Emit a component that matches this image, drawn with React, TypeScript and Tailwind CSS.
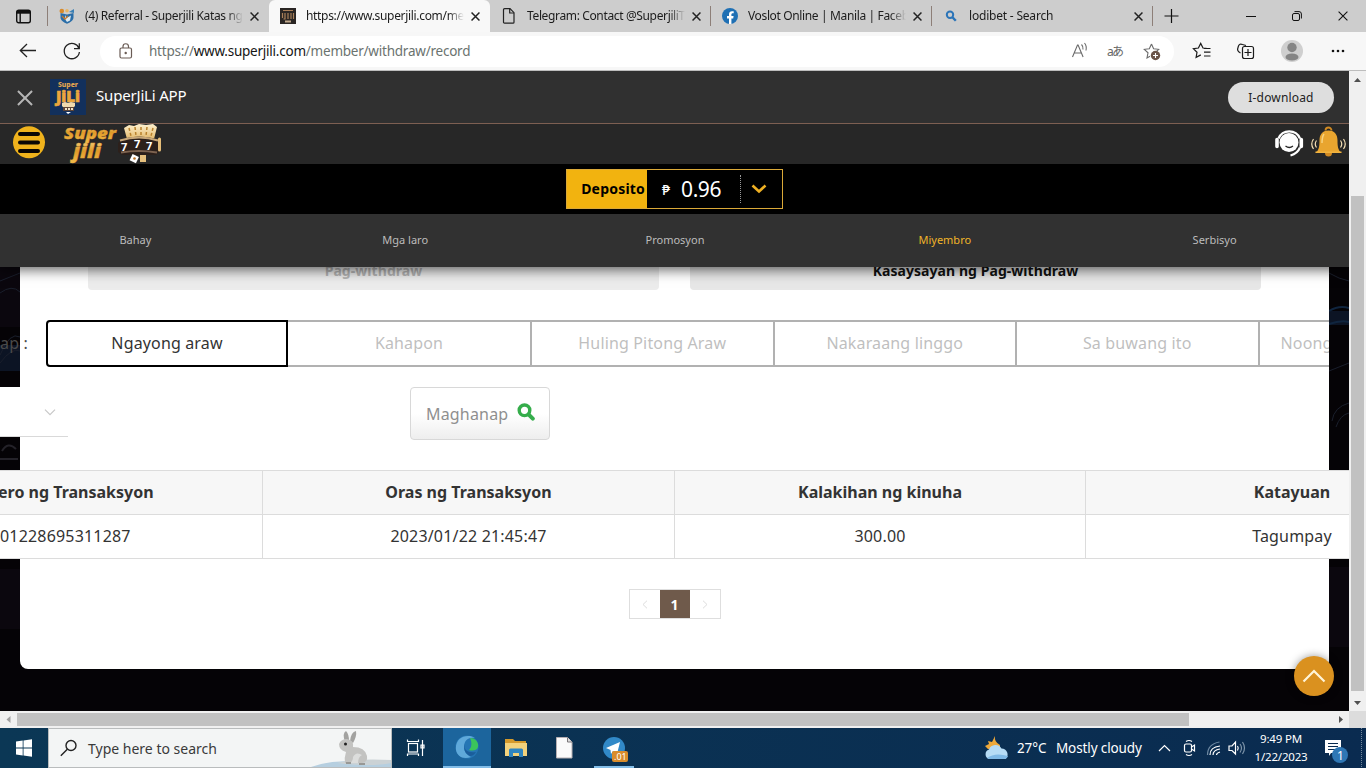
import type { ReactNode } from 'react';
import clsx from 'clsx';

const tabs = [
  { title: '(4) Referral - Superjili Katas ng', icon: 'shield', active: false, track: 'tracking-[-0.36px]' },
  { title: 'https://www.superjili.com/mem', icon: 'jili', active: true, track: 'tracking-[-0.32px]' },
  { title: 'Telegram: Contact @SuperjiliT', icon: 'file', active: false, track: 'tracking-[-0.36px]' },
  { title: 'Voslot Online | Manila | Facebo', icon: 'facebook', active: false, track: 'tracking-[-0.36px]' },
  { title: 'lodibet - Search', icon: 'search', active: false, track: 'tracking-[-0.2px]' },
];

const menus = ['Bahay', 'Mga laro', 'Promosyon', 'Miyembro', 'Serbisyo'];

const periods = ['Ngayong araw', 'Kahapon', 'Huling Pitong Araw', 'Nakaraang linggo', 'Sa buwang ito'];

function Favicon({ name }: { name: string }) {
  switch (name) {
    case 'shield':
      return (
        <svg width="16" height="16" viewBox="0 0 16 16">
          <path d="M1.500 5 8 6.500 14.500 5v4.500c0 3-3.500 5-6.500 6.200C5 14.500 1.500 12.500 1.500 9.500z" fill="#2b6ea8" />
          <path d="m6 7 1.500 3L12 7.500l-1 5-3 1.500-2-3z" fill="#dfe9ee" />
          <circle cx="2.800" cy="3" r="2.300" fill="#d78a2b" />
          <circle cx="8" cy="2.800" r="1.800" fill="#e7b565" />
          <path d="m10 4 5-3v4z" fill="#3a80b5" />
          <path d="m3 8 3 3 3-3" stroke="#c8792a" strokeWidth="1.300" fill="none" />
        </svg>
      );
    case 'jili':
      return (
        <svg width="16" height="16" viewBox="0 0 16 16">
          <rect width="16" height="16" fill="#2a2624" />
          <path d="M3 2.500h10M2.500 5v5M5 5v6H3.500M8 5v6M11 5v6M13.500 5v6" stroke="#a9805a" strokeWidth="1.200" fill="none" />
          <path d="M5 13.500h6" stroke="#c0a88c" strokeWidth="2" />
        </svg>
      );
    case 'file':
      return (
        <svg width="16" height="16" viewBox="0 0 16 16" fill="none" stroke="#222" strokeWidth="1.200">
          <path d="M3.500.7H9l4 4v9.500a1 1 0 0 1-1 1H3.500a1 1 0 0 1-1-1V1.700a1 1 0 0 1 1-1z" />
          <path d="M8.700.8v4.200h4.200" />
        </svg>
      );
    case 'facebook':
      return (
        <svg width="16" height="16" viewBox="0 0 16 16">
          <circle cx="8" cy="8" r="8" fill="#1f70b4" />
          <path d="M7 16v-5.600H5V8.100h2V6.300c0-2 1.200-3.100 3-3.100l1.700.1v2h-1c-1 0-1.300.6-1.300 1.200v1.600h2.200l-.4 2.300H9.400V16z" fill="#fff" />
        </svg>
      );
    default:
      return (
        <svg width="16" height="16" viewBox="0 0 16 16" fill="none" stroke="#2b74b8" strokeWidth="2">
          <circle cx="7" cy="6.800" r="3.200" />
          <path d="m9.400 9.200 3.400 3.600" strokeWidth="2.400" />
        </svg>
      );
  }
}

function Cross({ size = 9, stroke = 1.5, color = '#222' }: { size?: number; stroke?: number; color?: string }) {
  return (
    <svg width={size} height={size} viewBox="0 0 10 10" stroke={color} strokeWidth={(stroke * 10) / size} className="shrink-0">
      <path d="m.6.6 8.800 8.800M9.400.6.6 9.400" />
    </svg>
  );
}

/** Browser tab strip with the window buttons on its right end. */
function TabStrip() {
  return (
    <div className="flex h-8 items-center bg-[#cdcdcd]">
      <div className="flex h-5 w-12 items-center justify-center border-r border-[#8d7f78]">
        <svg width="15" height="15" viewBox="0 0 15 15" fill="none" stroke="#111" strokeWidth="1.400">
          <rect x=".7" y="1.200" width="13.600" height="12.600" rx="2" />
          <path d="M.7 3.200h13.600" strokeWidth="3" />
          <path d="M4.200 4v9.500" />
        </svg>
      </div>
      {tabs.map((tab, i) => (
        <div
          key={tab.title}
          className={clsx(
            'flex w-[221px] items-center pl-[11px]',
            tab.active ? 'h-8 rounded-t-md bg-[#f8f8f8]' : 'h-5',
            i > 1 && 'border-r border-[#8d7f78]',
          )}
        >
          <Favicon name={tab.icon} />
          <div
            className={clsx(
              'ml-[10px] w-[158px] overflow-hidden text-[12px] leading-5 whitespace-nowrap text-[#1c1c1c]',
              '[mask-image:linear-gradient(to_right,black_90%,transparent)]',
              tab.track,
            )}
          >
            {tab.title}
          </div>
          <div className="ml-[7px]">
            <Cross />
          </div>
        </div>
      ))}
      <svg width="36" height="16" viewBox="0 0 36 16" stroke="#111" strokeWidth="1.200">
        <path d="M18.500 1v14M11.500 8h14" />
      </svg>
      <div className="flex flex-1 items-center justify-end gap-9 pr-[18px]">
        <svg width="10" height="10" viewBox="0 0 10 10" stroke="#111">
          <path d="M0 5.500h10" />
        </svg>
        <svg width="10" height="10" viewBox="0 0 10 10" fill="none" stroke="#111">
          <rect x=".5" y="2.500" width="7" height="7" rx="1.500" />
          <path d="M2.500.6H7A2.400 2.400 0 0 1 9.400 3v4.500" />
        </svg>
        <Cross size={10} stroke={1.1} color="#111" />
      </div>
    </div>
  );
}

function AddressBar() {
  return (
    <div className="flex h-[39px] items-center border-b border-[#bdbdbd] bg-[#f7f7f7]">
      <svg width="100" height="38" viewBox="0 0 100 38" fill="none" stroke="#222" strokeWidth="1.300">
        <path d="M36 18.500H20.500M27 12l-6.700 6.500L27 25" />
        <path d="M79 16.500a7.600 7.600 0 1 0 .4 3.500M79.300 11.300v5.400h-5.300" />
      </svg>
      <div className="flex h-[31px] w-[1074px] items-center rounded-full bg-white pl-[19px]">
        <svg width="14" height="16" viewBox="0 0 14 16" fill="none" stroke="#6a5c55" strokeWidth="1.200">
          <rect x="1" y="5" width="11.500" height="10" rx="1.500" />
          <path d="M4 5V3.500a2.700 2.700 0 0 1 5.500 0V5" />
          <circle cx="6.700" cy="10" r=".6" fill="#6a5c55" />
        </svg>
        <div className="ml-4 flex-1 text-[13.500px] leading-5 tracking-[-0.23px] whitespace-nowrap text-[#6b736f]">
          https://<span className="text-[#151515]">www.superjili.com</span>/member/withdraw/record
        </div>
        <svg width="106" height="30" viewBox="0 0 106 30" fill="none" stroke="#6a6a6a" strokeWidth="1.100">
          <path d="m4.500 21 5-12h.6l5 12M6.200 17h7M13.500 8.500q2 2 1.500 5M16.500 7q2.500 3 1.500 7.500" />
          <text x="39" y="19.500" fontSize="12" fill="#666" stroke="none" fontFamily="Noto Sans, Noto Sans CJK JP" textLength="17">
            aあ
          </text>
          <path d="m83.500 8 2.100 4.700 5.100.6-3.800 3.500M83.500 8l-2.200 4.700-5 .6 3.700 3.500-1 5.200 3-1.700" />
          <circle cx="87.500" cy="19.500" r="4.700" fill="#6a5348" stroke="none" />
          <path d="M87.500 17v5M85 19.500h5" stroke="#fff" />
        </svg>
      </div>
      <svg width="192" height="38" viewBox="0 0 192 38" fill="none" stroke="#1c1c1c" strokeWidth="1.200">
        <path d="M32.500 16.300 29 16l-2.300-4.600-2.300 4.600-5 .7 3.600 3.600-.9 5.100 4.700-2.500M30 16.500h6.500M30 20.200h6.500M30 24h6.500" />
        <rect x="68.500" y="14.500" width="11" height="12" rx="2" />
        <path d="M74 17v7M70.500 20.500h7M66.500 21c-4-2-3-4-2-7 .7-2 2-2.300 4-1.500l3.500 1" />
        <circle cx="118" cy="19" r="11" fill="#cfcfcf" stroke="none" />
        <circle cx="118" cy="15.500" r="4.700" fill="#858585" stroke="none" />
        <ellipse cx="118" cy="25" rx="6.500" ry="3.600" fill="#858585" stroke="none" />
        <g fill="#111" stroke="none">
          <circle cx="159" cy="19" r="1.300" />
          <circle cx="164" cy="19" r="1.300" />
          <circle cx="169" cy="19" r="1.300" />
        </g>
      </svg>
    </div>
  );
}

function AppBanner() {
  return (
    <div className="flex h-[53px] items-center border-b border-[#7d5f52] bg-[#303030] pr-[15px] pl-[17px]">
      <div className="mt-[2px]">
        <Cross size={16} stroke={2} color="#b5b5b5" />
      </div>
      <svg width="36" height="36" viewBox="0 0 36 36" className="ml-[17px]">
        <rect width="36" height="36" fill="#12305c" />
        <text x="8" y="8" fontSize="7" fontWeight="800" fill="#e3a44e" textLength="20" lengthAdjust="spacingAndGlyphs">
          Super
        </text>
        <text x="6" y="22.500" fontSize="15" fontWeight="900" fill="#eaa63d" stroke="#eaa63d" strokeWidth=".6" textLength="24" lengthAdjust="spacingAndGlyphs">
          JiLi
        </text>
        <path d="m12 24 3-1 3 1 3-1 4 1v3l-2 2h-9l-2-2z" fill="#efd9ae" />
        <path d="M13 28h11v4H13z" fill="#5e4537" />
        <path d="M15 30h2M18 30h2M21 30h2" stroke="#f1e3c8" strokeWidth="2" />
        <path d="m16 33 2 2 3-2z" fill="#fff" />
      </svg>
      <span className="mb-1 ml-[10px] flex-1 text-[15px] tracking-[-0.18px] text-white">SuperJiLi APP</span>
      <button className="h-[31px] w-[106px] rounded-full bg-[#dedede] pt-px text-[12px] tracking-[0.17px] text-[#222]">I-download</button>
    </div>
  );
}

function SiteHeader() {
  return (
    <div className="flex h-10 items-center justify-between bg-[#272727] pr-[2px] pl-[13px]">
      <div className="flex items-center">
        <svg width="32" height="40" viewBox="0 0 32 40">
          <circle cx="16" cy="18.200" r="16" fill="#efb21c" />
          <path d="M7 10h18M7 18.500h18M7 27h18" stroke="#0a0705" strokeWidth="4" strokeLinecap="round" />
        </svg>
        <svg width="104" height="40" viewBox="0 0 104 40" className="ml-[17px]">
          <defs>
            <linearGradient id="gold" x1="0" y1="0" x2="0" y2="1">
              <stop offset="0" stopColor="#fbdf95" />
              <stop offset=".5" stopColor="#e09a28" />
              <stop offset="1" stopColor="#f4c04d" />
            </linearGradient>
            <linearGradient id="cards" x1="0" y1="0" x2="0" y2="1">
              <stop offset="0" stopColor="#fff2cf" />
              <stop offset="1" stopColor="#e2b86a" />
            </linearGradient>
          </defs>
          <g fill="url(#gold)" stroke="#e2a136" strokeWidth=".3" fontWeight="800" fontStyle="italic" fontFamily="Open Sans">
            <text x="2" y="14.500" fontSize="16" textLength="52" lengthAdjust="spacingAndGlyphs">
              Super
            </text>
            <text x="11" y="34" fontSize="19" textLength="28" lengthAdjust="spacingAndGlyphs">
              jili
            </text>
          </g>
          <path d="m62 4 5-3 5 1 5-2 7 1 7-1 4 3-3 12H65z" fill="url(#cards)" />
          <path d="m67 4 2 8M73 3l1 9M79 3v9M85 3l-1 9M91 4l-2 8" stroke="#b8812c" strokeWidth="1.500" strokeDasharray="3 2" />
          <path d="M60 15q17-5 35 0l2 3v10l-3 3H60l-4-3v-9z" fill="#2c201b" />
          <path d="M58 16.500q19-6 38 0" stroke="#c7a778" strokeWidth="2" fill="none" />
          <path d="M59 28.500q18-3 36 0" stroke="#7d6350" strokeWidth="2" fill="none" />
          <path d="M97.500 15v11" stroke="#e5bd78" strokeWidth="3" strokeLinecap="round" />
          <g fill="#fff" fontSize="11" fontWeight="700" fontFamily="Open Sans">
            <text x="59" y="26.500">7</text>
            <text x="72" y="24">7</text>
            <text x="84" y="26">7</text>
          </g>
          <rect x="69" y="31" width="7" height="7" fill="#fff" transform="rotate(25 72 34)" />
          <rect x="78" y="31" width="6" height="7" fill="#e6c07d" />
          <circle cx="72.500" cy="34.500" r="1.300" fill="#b96f26" />
        </svg>
      </div>
      <svg width="74" height="40" viewBox="0 0 74 40">
        <g fill="none" stroke="#fff">
          <circle cx="16" cy="18.500" r="9.500" fill="#fff" stroke="none" />
          <path d="M5.500 14.500a11.700 11.700 0 0 1 21.500 0M27 23.500q-2.500 6-9.500 8" strokeWidth="2.200" />
          <path d="M4 15.500v7M28.300 15.500v7" strokeWidth="3.600" strokeLinecap="round" />
          <path d="M12.500 22q3.800 3 7.500 0" stroke="#272727" strokeWidth="1.300" />
        </g>
        <g transform="translate(1 1)">
          <path d="M51.500 5.500a3 3 0 1 1 6 0" fill="none" stroke="#d28a22" strokeWidth="1.800" />
          <path d="M54.500 5.500c-6.500 0-9 4.500-9 10 0 6-.5 9.500-4 12.500h26c-3.500-3-4-6.500-4-12.500 0-5.500-2.500-10-9-10z" fill="#e9a52f" />
          <path d="M50 9q-2 3-2 9" stroke="#f8d27d" strokeWidth="1.500" fill="none" />
          <path d="M41.500 26.500h26V28h-26z" fill="#f0b340" />
          <path d="M51 28h7a3.500 3.500 0 0 1-7 0z" fill="#d28a22" />
          <path d="M42.500 15.500q-2.500 3.500 0 7M39.500 14q-3.500 5 0 10M66.500 15.500q2.500 3.500 0 7M69.500 14q3.500 5 0 10" fill="none" stroke="#f4dfb4" strokeWidth="1.200" />
        </g>
      </svg>
    </div>
  );
}

function BalanceBar() {
  return (
    <div className="flex h-[50px] items-center justify-center bg-black">
      <div className="flex h-10 w-[217px] border border-[#dba938]">
        <div className="flex w-20 items-center justify-end bg-[#f2b30f] pr-[2px] pb-[2px] text-[14px] font-bold tracking-[0.2px] text-black">
          Deposito
        </div>
        <div className="flex w-[93px] items-center gap-[11px] pt-px pl-[15px] text-white">
          <span className="text-[14px] font-medium">₱</span>
          <span className="text-[21px] tracking-[-0.4px]">0.96</span>
        </div>
        <div className="my-[5px] flex flex-1 items-center border-l border-dotted border-[#999] pl-[10px]">
          <svg width="16" height="10" viewBox="0 0 16 10" fill="none" stroke="#eeb023" strokeWidth="2.600">
            <path d="m1.500 1.500 6.500 6 6.500-6" />
          </svg>
        </div>
      </div>
    </div>
  );
}

function MainMenu() {
  return (
    <nav className="flex h-[53px] items-center bg-[#313131] text-center text-[11px] text-[#bcbcbc] shadow-[0_3px_12px_rgba(0,0,0,0.6)]">
      {menus.map((menu) => (
        <a key={menu} className={clsx('flex-1 pl-px', menu === 'Miyembro' && 'text-[#f0b429]')}>
          {menu}
        </a>
      ))}
    </nav>
  );
}

function HeadCell({ children }: { children?: ReactNode }) {
  return <th className="border-b border-l border-[#dcdcdc] p-0 pb-[2px] text-center font-bold">{children}</th>;
}

function BodyCell({ children }: { children?: ReactNode }) {
  return <td className="border-b border-l border-[#dcdcdc] p-0 pb-[2px] text-center">{children}</td>;
}

/** The panel is narrower than its content, so the period row and table run past its edges. */
function WithdrawRecord() {
  return (
    <section className="mx-5 h-[402px] rounded-b-lg bg-white">
      <div className="flex gap-[31px] pl-[68px] text-center text-[14px] leading-[18px] font-bold tracking-[0.06px]">
        <div className="h-[23px] w-[571px] overflow-hidden rounded-b bg-[#ececec] text-[#b4b4b4]">
          <div className="-mt-[5px]">Pag-withdraw</div>
        </div>
        <div className="h-[23px] w-[571px] overflow-hidden rounded-b bg-[#e7e7e7] text-[#111]">
          <div className="-mt-[5px]">Kasaysayan ng Pag-withdraw</div>
        </div>
      </div>

      <div className="mt-[30px] -ml-5 flex h-[47px] items-center overflow-hidden text-[16px] tracking-[0.15px]">
        <div className="mb-[2px] w-[46px] shrink-0 text-[#4a4a4a]">ap :</div>
        {periods.map((period, i) => (
          <div
            key={period}
            className={clsx(
              'flex h-full shrink-0 items-center justify-center border-2 pb-[2px]',
              i === 0 && 'z-10 w-[242px] rounded-l border-black text-[#333]',
              i === 1 && 'w-[246px]',
              i > 1 && 'w-[244.500px]',
              i > 0 && '-ml-[2px] border-[#b1b1b1] text-[#bfbfbf]',
            )}
          >
            {period}
          </div>
        ))}
        <div className="-ml-[2px] flex h-full w-[244px] shrink-0 items-center border-2 border-[#b1b1b1] pb-[2px] pl-[21px] whitespace-nowrap text-[#bfbfbf]">
          Noong nakaraang buwan
        </div>
      </div>

      <div className="mt-5 -ml-5 flex h-[53px] items-start">
        <div className="flex h-[50px] w-[68px] items-center justify-end border-b border-[#d9d9d9] bg-white pt-px pr-3">
          <svg width="12" height="7" viewBox="0 0 12 7" fill="none" stroke="#c8c8c8" strokeWidth="1.200">
            <path d="m1 .7 5 5 5-5" />
          </svg>
        </div>
        <button className="ml-[342px] flex h-[53px] w-[140px] items-center rounded border border-[#d8d8d8] bg-linear-to-b from-white from-50% to-[#eeeeee] pl-[15px] text-[16px] tracking-[0.18px] text-[#8f8f8f]">
          <span className="w-[91px] text-left">Maghanap</span>
          <svg width="18" height="18" viewBox="0 0 18 18" fill="none" stroke="#35ad4b" className="mb-[3px]">
            <circle cx="7.500" cy="7.300" r="5.300" strokeWidth="3.400" />
            <path d="m11.500 11.300 4.300 4.300" strokeWidth="4" strokeLinecap="round" />
          </svg>
        </button>
      </div>

      <div className="-mx-5 mt-[30px] overflow-hidden">
        <table className="w-[1498px] table-fixed border-separate border-spacing-0 border-t border-[#dcdcdc] bg-white text-[16px] text-[#333]">
          <colgroup>
            <col className="w-[262px]" />
            <col className="w-[412px]" />
            <col className="w-[411px]" />
            <col className="w-[413px]" />
          </colgroup>
          <thead>
            <tr className="h-11 bg-[#f7f7f7]">
              <th className="border-b border-[#dcdcdc] p-0 pb-[2px] text-left font-bold whitespace-nowrap">
                <span className="-ml-[2px]">ero ng Transaksyon</span>
              </th>
              <HeadCell>Oras ng Transaksyon</HeadCell>
              <HeadCell>Kalakihan ng kinuha</HeadCell>
              <HeadCell>Katayuan</HeadCell>
            </tr>
          </thead>
          <tbody className="tracking-[0.18px]">
            <tr className="h-11">
              <td className="border-b border-[#dcdcdc] p-0 pb-[2px] text-left">01228695311287</td>
              <BodyCell>2023/01/22 21:45:47</BodyCell>
              <BodyCell>300.00</BodyCell>
              <BodyCell>Tagumpay</BodyCell>
            </tr>
          </tbody>
        </table>
      </div>

      <div className="mt-[30px] flex justify-center">
        <div className="flex h-[30px] w-[92px] items-stretch border border-[#dedede] text-[14px]">
          <div className="flex flex-1 items-center justify-center">
            <svg width="6" height="9" viewBox="0 0 6 9" fill="none" stroke="#ddd">
              <path d="m5 .7-4 3.800 4 3.800" />
            </svg>
          </div>
          <div className="flex w-[30px] items-center justify-center bg-[#6f5a4b] font-bold text-white">1</div>
          <div className="flex flex-1 items-center justify-center">
            <svg width="6" height="9" viewBox="0 0 6 9" fill="none" stroke="#ddd">
              <path d="m1 .7 4 3.800-4 3.800" />
            </svg>
          </div>
        </div>
      </div>
    </section>
  );
}

function Backdrop() {
  return (
    <svg width="1349" height="444" viewBox="0 0 1349 444" className="absolute inset-0" fill="none">
      <path d="M0 0h20v60H0zM0 302h20v60H0zM1329 300h20v80h-20z" fill="#0b070e" />
      <path d="M0 78h20v26H0zM1329 44h20v14h-20z" fill="#0c1424" />
      <g stroke="#1a1f2c">
        <path d="M0 14 20 6M0 26q12-9 20-1M0 88q10-24 20-18M0 96q12-16 20-12" />
        <path d="M1329 6q10 6 20 8M1332 154q2-14 17-18M1336 160q4-12 13-14M1329 104l20-8" />
        <path d="M2 184q6-10 14-2M0 192h18" stroke="#242229" strokeWidth="2" />
      </g>
      <path d="M1329 44q10-6 20-3M1329 57q12-4 20-2" stroke="#10253f" strokeWidth="2" />
    </svg>
  );
}

function Arrow({ d, color = '#505050' }: { d: string; color?: string }) {
  return (
    <svg width="17" height="17" viewBox="0 0 17 17" fill={color} className="shrink-0">
      <path d={d} />
    </svg>
  );
}

function Taskbar() {
  return (
    <div className="flex h-10 items-center bg-linear-to-r from-[#0b3755] to-[#0a2b50] text-white">
      <svg width="48" height="40" viewBox="0 0 48 40" fill="#fff">
        <path d="m16 13.500 6.700-1v7H16zM23.500 12.400l8.500-1.200v8.300h-8.500zM16 20.500h6.700v7l-6.700-1zM23.500 20.500H32v8.300l-8.500-1.200z" />
      </svg>
      <div className="flex h-10 w-[344px] items-center border border-[#b9bcbd] bg-[#f3f5f5] pl-[11px]">
        <svg width="18" height="18" viewBox="0 0 18 18" fill="none" stroke="#222" strokeWidth="1.400">
          <circle cx="11" cy="6.500" r="5" />
          <path d="M7.300 10.200.8 16.700" />
        </svg>
        <span className="ml-[10px] flex-1 text-[14px] text-[#3a3a3a]">Type here to search</span>
        <svg width="80" height="38" viewBox="0 0 80 38">
          <path d="M0 38q22-8 46-5 20-2 34-1v6z" fill="#b6cfe0" />
          <path d="M26 34q20-5 54-3v3q-20 4-54 0z" fill="#cbd2d5" />
          <path d="M34 13q-3-9 1-11 3 3 3 10M39 12q1-9 6-10 1 5-3 12" fill="#a2a2a0" />
          <path d="M28 15q2-5 8-5 7 1 6 8 12 0 14 9 1 6-5 7H34q-1-5 1-11-7-2-7-8z" fill="#c3c3c1" />
          <path d="M42 28q3-6 9-2-4 2-4 8h-8q3-2 3-6z" fill="#dcdddc" />
          <circle cx="34.500" cy="15" r="1.500" fill="#222" />
          <path d="M35 34h5M48 35h6" stroke="#989895" strokeWidth="2" />
        </svg>
      </div>
      <svg width="51" height="40" viewBox="0 0 51 40" fill="none" stroke="#fff" strokeWidth="1.200">
        <rect x="16.500" y="15.500" width="9" height="8.500" />
        <path d="M15.500 11.500v2h11v-2M15.500 28v-2h11v2M30.500 12v16M29 17h3v3h-3z" />
      </svg>
      <div className="flex h-10 w-12 items-center justify-center border-b-2 border-[#82bde8] bg-[#1c659d]">
        <svg width="24" height="24" viewBox="0 0 24 24">
          <circle cx="12" cy="12" r="11.500" fill="#2576b4" />
          <path d="M1 15C0 6 6 1 13 1c3 0 5 .5 7 2-6-1-11 2-11 9 0 5 3 8 7 10-8 3-14-1-15-7z" fill="#5fa9da" />
          <path d="M15 3c6 0 9 5 8 9s-6 4-9 3c3-3 3-8 1-12z" fill="#3bc45b" />
          <path d="M10 9c-2 6 3 9 11 8-2 3-4 4-6 4-5-2-7-8-5-12z" fill="#1b5d9b" />
        </svg>
      </div>
      <svg width="48" height="40" viewBox="0 0 48 40">
        <path d="M14 11h8l2 2h11v15H14z" fill="#d59a2c" />
        <path d="M14 15h22v13H14z" fill="#f3d27c" />
        <path d="M18 29v-7q0-1.500 1.500-1.500h11q1.500 0 1.500 1.500v7h-4v-4h-6v4z" fill="#2e84c0" />
      </svg>
      <svg width="49" height="40" viewBox="0 0 49 40">
        <path d="M17.500 9.500h11l4.500 4.500v16H17.500z" fill="#fafafa" stroke="#b6afb2" />
        <path d="M28.500 9.500v4.500H33" fill="#ddd" stroke="#7b777a" />
      </svg>
      <div className="ml-[6px] h-10 w-10 border-b-2 border-[#82bde8]">
        <svg width="40" height="38" viewBox="0 0 40 38">
          <circle cx="20" cy="20" r="11" fill="#3189c8" />
          <path d="m12 20 14-6-3 12-4-3-2 3-.5-4z" fill="#fff" />
          <rect x="18" y="23" width="16" height="11" rx="2" fill="#d98c2b" />
          <text x="20" y="32" fontSize="9" fill="#fff" fontFamily="Noto Sans">
            .01
          </text>
        </svg>
      </div>
      <div className="flex flex-1 items-center justify-end">
        <svg width="26" height="24" viewBox="0 0 26 24">
          <path d="M11 0q-1 6 5 9v4H4L1 10l4-2-1-3 4 1z" fill="#eea93a" />
          <path d="M5 23a5 5 0 0 1 0-9.500 7 7 0 0 1 12.500-1 6 6 0 0 1 4 10.500z" fill="#b6dcf5" />
          <path d="M3 22q8-6 21-2-1 3-4 3H5z" fill="#7fb9e6" />
        </svg>
        <span className="ml-[7px] w-[39px] pt-px text-[13.500px] tracking-[-0.1px]">27°C</span>
        <span className="w-[101px] pt-px text-[13.500px] tracking-[-0.12px] whitespace-nowrap">Mostly cloudy</span>
        <svg width="90" height="40" viewBox="0 0 90 40" fill="none" stroke="#fff" strokeWidth="1.200">
          <path d="m2 23 5.500-5.500L13 23" />
          <rect x="27.500" y="16" width="7" height="8" rx="1.500" />
          <path d="m34.500 19 3-2v6l-3-2M29 13.500q3-2 6 0M29 26.500q3 2 6 0" />
          <path d="M53 27q0-8 10-9M56 27q0-5 7-6M59.500 27q0-2 3.500-3" />
          <path d="M50.500 27q0-11 12-13" stroke="#6f8aa3" />
          <path d="M72 18h3l3.500-4v12L75 22.500h-3zM80.500 18q1.500 2 0 4.500" />
          <path d="M83 16q3 4 0 8.500M85.500 14q4 6 0 12" stroke="#7e95aa" />
        </svg>
        <div className="w-[68px] text-center text-[11.500px] leading-[18px] tracking-[-0.2px]">
          <div>9:49 PM</div>
          <div>1/22/2023</div>
        </div>
        <svg width="51" height="40" viewBox="0 0 51 40">
          <path d="M10 12h16v13H16l-2 3v-3h-4z" fill="#fff" />
          <path d="M13 15.500h10M13 18.500h10M13 21.500h7" stroke="#0a2b50" />
          <circle cx="25" cy="27" r="8" fill="#2f77b5" />
          <text x="22" y="31.500" fontSize="12" fill="#fff" fontFamily="Noto Sans">
            1
          </text>
          <path d="M46.500 0v40" stroke="#71879c" strokeDasharray="1 1" />
        </svg>
      </div>
    </div>
  );
}

export default function App() {
  return (
    <div className="flex h-[768px] w-[1366px] flex-col overflow-hidden font-['Noto_Sans','Open_Sans',sans-serif]">
      <TabStrip />
      <AddressBar />
      <div className="flex h-[640px]">
        <main className="flex w-[1349px] flex-col overflow-hidden bg-[#050306]">
          <header className="relative z-20">
            <AppBanner />
            <SiteHeader />
            <BalanceBar />
            <MainMenu />
          </header>
          <div className="relative h-[444px] overflow-hidden">
            <Backdrop />
            <div className="relative">
              <WithdrawRecord />
            </div>
            <button className="absolute right-[15px] bottom-[15px] flex size-10 items-center justify-center rounded-full bg-[#da911f] shadow-[0_0_8px_rgba(0,0,0,0.4)]">
              <svg width="24" height="14" viewBox="0 0 24 14" fill="none" stroke="#fff5d8" strokeWidth="2.200">
                <path d="M1.500 12.500 12 2l10.500 10.500" />
              </svg>
            </button>
          </div>
        </main>
        <div className="flex w-[17px] flex-col items-center bg-[#f0f0f0]">
          <Arrow d="m5 11 3.500-4L12 11z" />
          <div className="mt-[108px] h-[495px] w-[13px] bg-[#c1c1c1]" />
          <div className="mt-[3px]">
            <Arrow d="m5 7 3.500 4L12 7z" />
          </div>
        </div>
      </div>
      <div className="flex h-[17px] items-center bg-[#f0f0f0]">
        <Arrow d="m10.500 5-4 3.500 4 3.500z" color="#a0a0a0" />
        <div className="h-[13px] w-[1172px] bg-[#c1c1c1]" />
        <div className="ml-[143px]">
          <Arrow d="m7 5 4 3.500L7 12z" />
        </div>
        <div className="h-full flex-1 bg-[#dcdcdc]" />
      </div>
      <Taskbar />
    </div>
  );
}
